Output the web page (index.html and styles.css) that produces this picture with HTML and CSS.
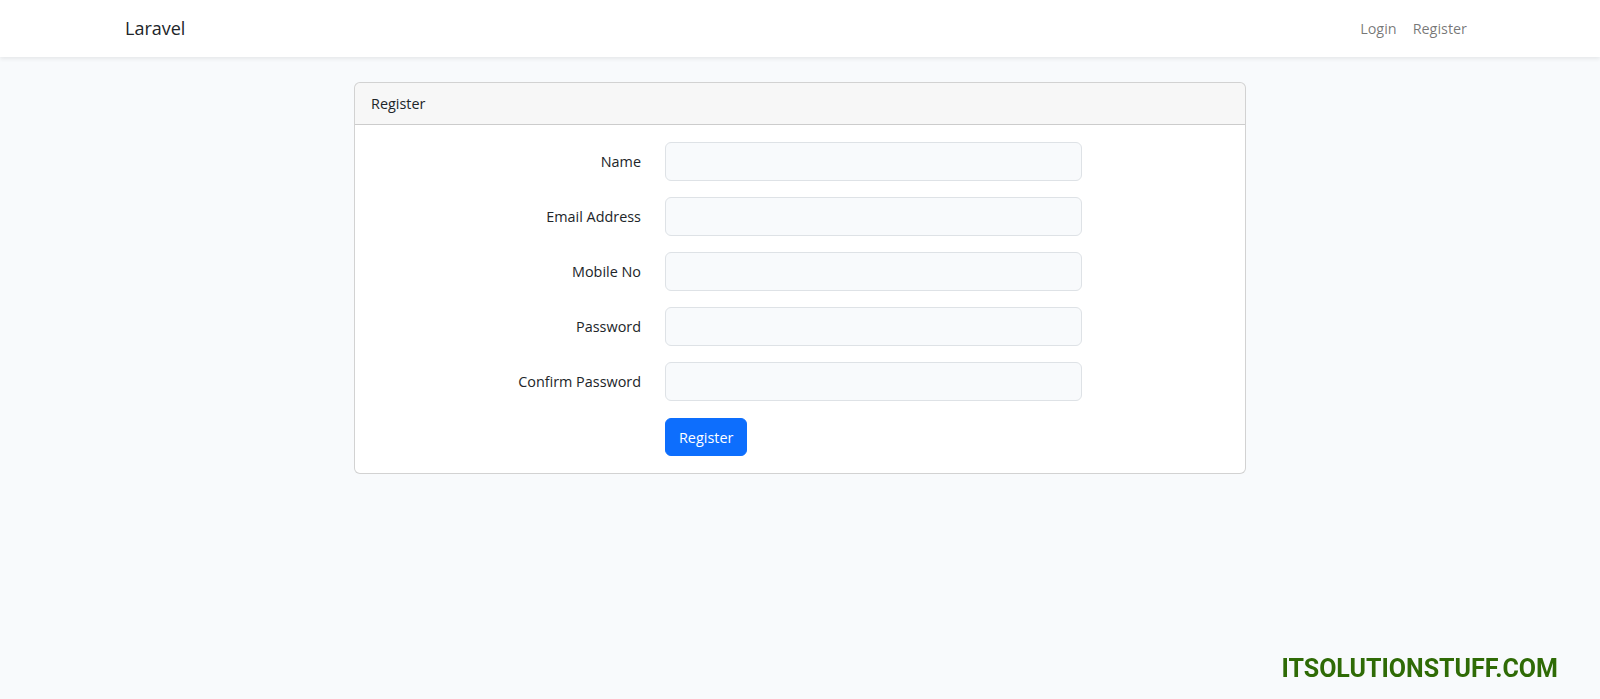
FILE: index.html
```html
<!DOCTYPE html>
<html lang="en">
<head>
    <meta charset="UTF-8">
    <meta name="viewport" content="width=device-width, initial-scale=1.0">
    <title>Laravel</title>
    <link rel="stylesheet" href="styles.css">
</head>
<body>

    <nav class="navbar">
        <div class="container nav-inner">
            <a class="brand" href="#">Laravel</a>
            <ul class="nav-links">
                <li><a href="#">Login</a></li>
                <li><a href="#">Register</a></li>
            </ul>
        </div>
    </nav>

    <main class="main">
        <div class="container">
            <div class="row">
                <div class="col-8">
                    <div class="card">
                        <div class="card-header">Register</div>
                        <div class="card-body">
                            <form>
                                <div class="form-row">
                                    <label class="form-label" for="name">Name</label>
                                    <div class="form-field">
                                        <input type="text" id="name" class="form-control">
                                    </div>
                                </div>
                                <div class="form-row">
                                    <label class="form-label" for="email">Email Address</label>
                                    <div class="form-field">
                                        <input type="email" id="email" class="form-control">
                                    </div>
                                </div>
                                <div class="form-row">
                                    <label class="form-label" for="mobile">Mobile No</label>
                                    <div class="form-field">
                                        <input type="text" id="mobile" class="form-control">
                                    </div>
                                </div>
                                <div class="form-row">
                                    <label class="form-label" for="password">Password</label>
                                    <div class="form-field">
                                        <input type="password" id="password" class="form-control">
                                    </div>
                                </div>
                                <div class="form-row">
                                    <label class="form-label" for="password-confirm">Confirm Password</label>
                                    <div class="form-field">
                                        <input type="password" id="password-confirm" class="form-control">
                                    </div>
                                </div>
                                <div class="form-row last">
                                    <div class="form-field offset">
                                        <button type="submit" class="btn-primary">Register</button>
                                    </div>
                                </div>
                            </form>
                        </div>
                    </div>
                </div>
            </div>
        </div>
    </main>

    <div class="watermark">ITSOLUTIONSTUFF.COM</div>

</body>
</html>
```

FILE: styles.css
```css
* {
    box-sizing: border-box;
}
body {
    margin: 0;
    font-family: "Open Sans", Arial, sans-serif;
    font-size: 14.4px;
    line-height: 1.6;
    color: #212529;
    background-color: #f8fafc;
}
.container {
    width: 100%;
    max-width: 1374px;
    margin: 0 auto;
    padding: 0 12px;
}
.navbar {
    background-color: #fff;
    padding: 8px 0;
    box-shadow: 0 2px 4px rgba(0, 0, 0, 0.075);
}
.nav-inner {
    display: flex;
    justify-content: space-between;
    align-items: center;
}
.brand {
    font-size: 18px;
    line-height: 31px;
    padding: 5px 0;
    color: #212529;
    text-decoration: none;
}
.nav-links {
    display: flex;
    list-style: none;
    margin: 0;
    padding: 0;
}
.nav-links a {
    display: block;
    padding: 8px;
    color: rgba(0, 0, 0, 0.55);
    text-decoration: none;
}
.main {
    padding: 25px 0;
}
.row {
    display: flex;
    justify-content: center;
    margin: 0 -12px;
}
.col-8 {
    flex: 0 0 66.6667%;
    padding: 0 12px;
}
.card {
    background-color: #fff;
    border: 1px solid rgba(0, 0, 0, 0.175);
    border-radius: 6px;
}
.card-header {
    padding: 8px 16px;
    line-height: 25px;
    background-color: rgba(0, 0, 0, 0.03);
    border-bottom: 1px solid rgba(0, 0, 0, 0.175);
    border-radius: 5px 5px 0 0;
}
.card-body {
    padding: 17px 16px;
}
.form-row {
    display: flex;
    margin: 0 -12px 16px;
}
.form-row.last {
    margin-bottom: 0;
}
.form-row.last .form-field {
    padding-top: 1px;
}
.form-label {
    flex: 0 0 33.3333%;
    padding: 8px 12px;
    text-align: right;
}
.form-field {
    flex: 0 0 50%;
    padding: 0 12px;
}
.form-field.offset {
    margin-left: 33.3333%;
}
.form-control {
    display: block;
    width: 100%;
    height: 39px;
    padding: 6px 12px;
    font: inherit;
    color: #212529;
    background-color: #f8fafc;
    border: 1px solid #dee2e6;
    border-radius: 6px;
}
.btn-primary {
    font: inherit;
    color: #fff;
    background-color: #0d6efd;
    border: 1px solid #0d6efd;
    border-radius: 6px;
    padding: 6px 13px;
    height: 38px;
    cursor: pointer;
}
.watermark {
    position: fixed;
    right: 42px;
    bottom: 10px;
    font-family: Roboto, Arial, sans-serif;
    font-weight: 700;
    font-size: 25px;
    color: #2f6b06;
}
```
